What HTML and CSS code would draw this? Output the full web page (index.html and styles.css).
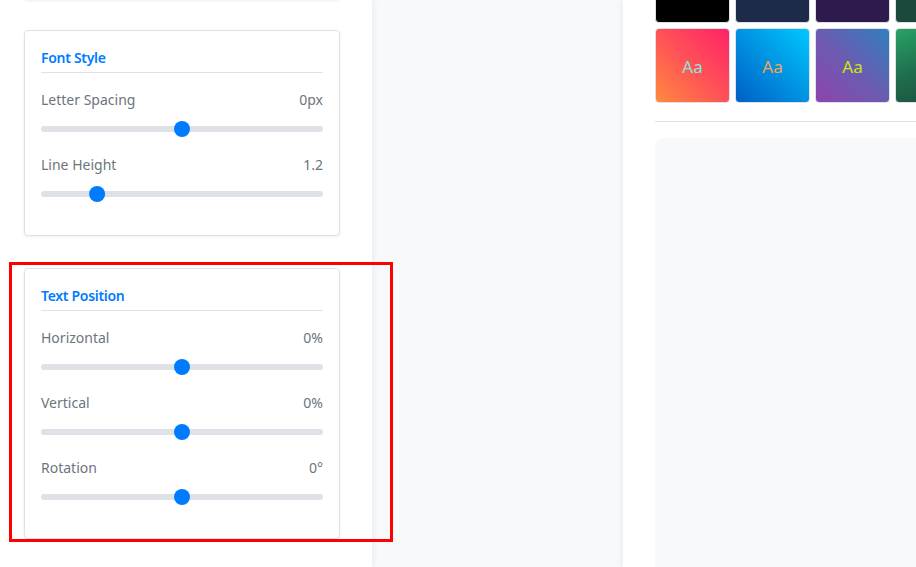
FILE: index.html
```html
<!DOCTYPE html>
<html lang="en">
<head>
<meta charset="utf-8">
<title>Text Editor</title>
<link rel="stylesheet" href="styles.css">
</head>
<body>
<div class="layout">
  <aside class="sidebar">
    <div class="card card-prev"></div>

    <section class="card card-first">
      <h3 class="card-title">Font Style</h3>
      <div class="control">
        <div class="control-head"><span>Letter Spacing</span><span>0px</span></div>
        <div class="slider"><div class="track"></div><div class="thumb" style="left: 50%"></div></div>
      </div>
      <div class="control">
        <div class="control-head"><span>Line Height</span><span>1.2</span></div>
        <div class="slider"><div class="track"></div><div class="thumb" style="left: 18%"></div></div>
      </div>
    </section>

    <section class="card">
      <h3 class="card-title">Text Position</h3>
      <div class="control">
        <div class="control-head"><span>Horizontal</span><span>0%</span></div>
        <div class="slider"><div class="track"></div><div class="thumb" style="left: 50%"></div></div>
      </div>
      <div class="control">
        <div class="control-head"><span>Vertical</span><span>0%</span></div>
        <div class="slider"><div class="track"></div><div class="thumb" style="left: 50%"></div></div>
      </div>
      <div class="control">
        <div class="control-head"><span>Rotation</span><span>0°</span></div>
        <div class="slider"><div class="track"></div><div class="thumb" style="left: 50%"></div></div>
      </div>
    </section>
  </aside>

  <main class="canvas-area"></main>

  <aside class="panel">
    <div class="swatches">
      <div class="swatch s-black"></div>
      <div class="swatch s-navy"></div>
      <div class="swatch s-purple"></div>
      <div class="swatch s-green"></div>
      <div class="swatch g-sunset"><span class="aa aa-aqua">Aa</span></div>
      <div class="swatch g-ocean"><span class="aa aa-orange">Aa</span></div>
      <div class="swatch g-violet"><span class="aa aa-lime">Aa</span></div>
      <div class="swatch g-forest"></div>
    </div>
    <hr class="divider">
    <div class="preview-box"></div>
  </aside>
</div>

<div class="highlight"></div>
</body>
</html>
```

FILE: styles.css
```css
* {
  box-sizing: border-box;
}

html, body {
  margin: 0;
  padding: 0;
  height: 100%;
  overflow: hidden;
}

body {
  font-family: "Noto Sans", "Open Sans", "DejaVu Sans", sans-serif;
  background: #f8f9fa;
  color: #6c757d;
}

.layout {
  display: flex;
  height: 567px;
}

.sidebar {
  width: 372px;
  flex: none;
  background: #ffffff;
  padding: 0 32px 0 24px;
  box-shadow: 2px 0 6px rgba(0, 0, 0, 0.05);
  position: relative;
  z-index: 1;
}

.card {
  background: #ffffff;
  border: 1px solid #dee2e6;
  border-radius: 4px;
  box-shadow: 0 1px 3px rgba(0, 0, 0, 0.07);
  padding: 16px 16px 16px;
  margin-top: 32px;
}

.card-prev {
  height: 80px;
  margin-top: -80px;
  border-color: #f1f3f5;
}

.card-first {
  margin-top: 30px;
}

.card-title {
  margin: 0 0 16px;
  font-size: 14px;
  line-height: 21px;
  font-weight: 600;
  letter-spacing: -0.3px;
  color: #007bff;
  padding-bottom: 4px;
  border-bottom: 1px solid #dee2e6;
}

.control {
  margin-bottom: 17px;
}

.control-head {
  display: flex;
  justify-content: space-between;
  font-size: 14px;
  line-height: 21px;
  color: #6c757d;
  margin-bottom: 11px;
}

.slider {
  position: relative;
  height: 16px;
}

.track {
  position: absolute;
  left: 0;
  right: 0;
  top: 5px;
  height: 6px;
  border-radius: 3px;
  background: #dee2e6;
}

.thumb {
  position: absolute;
  top: 0;
  width: 16px;
  height: 16px;
  margin-left: -8px;
  border-radius: 50%;
  background: #007bff;
  transform: translateX(calc(8px - 16px * var(--p, 0)));
}

.slider .thumb[style*="50%"] { --p: 0.5; }
.slider .thumb[style*="18%"] { --p: 0.18; }

.canvas-area {
  flex: 1;
  background: #f8f9fa;
}

.panel {
  width: 293px;
  flex: none;
  background: #ffffff;
  padding-left: 32px;
  box-shadow: -2px 0 6px rgba(0, 0, 0, 0.05);
  overflow: hidden;
}

.swatches {
  display: grid;
  grid-template-columns: repeat(4, 75px);
  grid-auto-rows: 75px;
  gap: 5px 5px;
  margin-top: -52px;
  width: 340px;
}

.swatch {
  border: 1px solid #dee2e6;
  border-radius: 4px;
  display: flex;
  align-items: center;
  justify-content: center;
}

.s-black { background: #000000; }
.s-navy { background: #1e2a4a; }
.s-purple { background: #2e1b4e; }
.s-green { background: #1b4a3c; }

.g-sunset { background: linear-gradient(45deg, #ff8a3d 0%, #ff5158 50%, #ff2266 100%); }
.g-ocean { background: linear-gradient(45deg, #005fc6 0%, #0098e4 55%, #00c9ff 100%); }
.g-violet { background: linear-gradient(45deg, #8e44ad 0%, #6a5cb0 50%, #2f80c0 100%); }
.g-forest { background: linear-gradient(160deg, #28a265 0%, #1f6e4e 50%, #1a4a3a 100%); }

.aa {
  font-size: 17px;
  line-height: 1;
  margin-top: 2px;
}

.aa-aqua { color: #8ae6dc; }
.aa-orange { color: #f7a352; }
.aa-lime { color: #c8e810; }

.divider {
  margin: 18px 0 16px;
  border: 0;
  border-top: 1px solid #dee2e6;
  width: 400px;
}

.preview-box {
  background: #f8f9fa;
  border-radius: 8px;
  height: 500px;
  width: 400px;
}

.highlight {
  position: absolute;
  left: 9px;
  top: 262px;
  width: 384px;
  height: 280px;
  border: 3px solid #ff0000;
  pointer-events: none;
  z-index: 5;
}
```
